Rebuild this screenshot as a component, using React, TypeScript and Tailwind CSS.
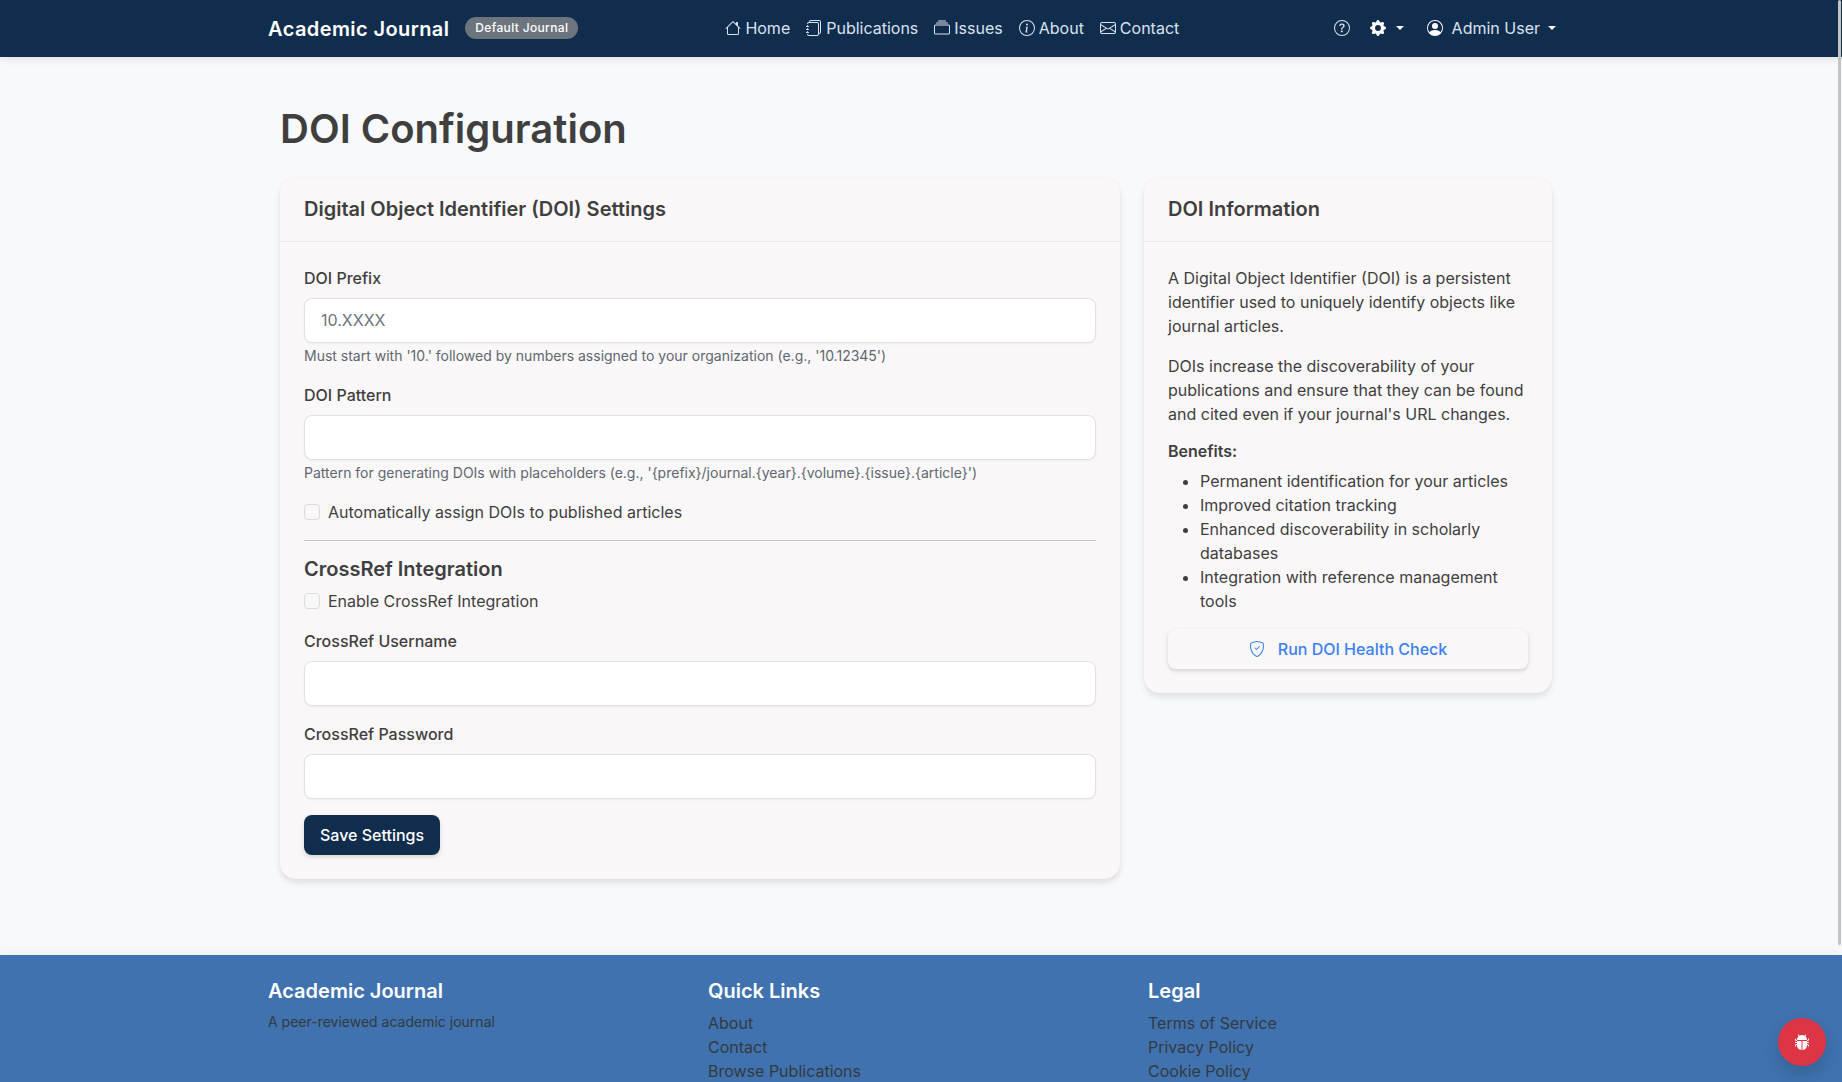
import {
  BsBugFill,
  BsCollection,
  BsEnvelope,
  BsGearFill,
  BsHouse,
  BsInfoCircle,
  BsJournals,
  BsPersonCircle,
  BsQuestionCircle,
  BsShieldCheck,
} from "react-icons/bs";

const navLinks = [
  { label: "Home", icon: BsHouse },
  { label: "Publications", icon: BsJournals },
  { label: "Issues", icon: BsCollection },
  { label: "About", icon: BsInfoCircle },
  { label: "Contact", icon: BsEnvelope },
];

const benefits = [
  "Permanent identification for your articles",
  "Improved citation tracking",
  "Enhanced discoverability in scholarly databases",
  "Integration with reference management tools",
];

function Caret() {
  return <span className="inline-block border-x-[4.8px] border-t-[4.8px] border-x-transparent border-t-current" />;
}

function Navbar() {
  return (
    <header className="relative z-10 h-[57px] bg-[#112d4e] pr-[10px] shadow-[0_2px_8px_rgba(0,0,0,0.1)]">
      <div className="mx-auto flex h-full w-[1296px] items-center text-[#dbe2ef]">
        <a className="text-[20px] font-semibold tracking-[0.4px] text-white">Academic Journal</a>
        <span className="mb-[2px] ml-4 rounded-full bg-[#6c757d] px-[10px] py-1 text-[12px] leading-[14px] font-medium tracking-[0.35px] text-white">
          Default Journal
        </span>
        <nav className="mb-[2px] ml-[139px] flex items-center">
          {navLinks.map((link) => (
            <a key={link.label} className="flex items-center gap-1 px-2">
              <link.icon className="h-4 w-4" />
              {link.label}
            </a>
          ))}
        </nav>
        <div className="mb-[2px] ml-auto flex items-center pr-2">
          <BsQuestionCircle className="h-4 w-4" />
          <span className="ml-5 flex items-center gap-[10px] text-white">
            <BsGearFill className="h-4 w-4" />
            <Caret />
          </span>
          <span className="ml-[23px] flex items-center">
            <BsPersonCircle className="h-4 w-4 text-white" />
            <span className="ml-[9px]">Admin User</span>
            <span className="ml-2 flex text-white">
              <Caret />
            </span>
          </span>
        </div>
      </div>
    </header>
  );
}

function Card({ title, children }: { title: string; children: React.ReactNode }) {
  return (
    <div className="rounded-2xl bg-[#f9f7f7] shadow-[0_4px_6px_rgba(0,0,0,0.1),0_0_2px_rgba(0,0,0,0.03)]">
      <div className="h-[65px] border-b border-[#ebe9ea] px-6 pt-5 text-[20px] leading-6 font-semibold">{title}</div>
      <div className="p-6">{children}</div>
    </div>
  );
}

function Field({ label, placeholder, help, type }: { label: string; placeholder?: string; help?: string; type?: string }) {
  return (
    <div className="mb-4">
      <label className="mb-2 block font-medium">{label}</label>
      <input
        type={type ?? "text"}
        placeholder={placeholder}
        className="block h-[45px] w-full rounded-lg border border-[#dee2e6] bg-white px-4 pb-[1px] shadow-[0_1px_2px_rgba(0,0,0,0.05)] outline-none placeholder:text-[#6c757d]"
      />
      {help && <p className="mt-[2px] pb-[1px] text-[14px] leading-[21px] text-[#5f6771]">{help}</p>}
    </div>
  );
}

function Check({ label, className }: { label: string; className: string }) {
  return (
    <label className={`flex items-center gap-2 ${className}`}>
      <input type="checkbox" className="h-4 w-4 appearance-none rounded-[4px] border border-[#d9dde2] bg-[#f9f7f7]" />
      {label}
    </label>
  );
}

function SettingsCard() {
  return (
    <Card title="Digital Object Identifier (DOI) Settings">
      <Field
        label="DOI Prefix"
        placeholder="10.XXXX"
        help="Must start with '10.' followed by numbers assigned to your organization (e.g., '10.12345')"
      />
      <Field
        label="DOI Pattern"
        help="Pattern for generating DOIs with placeholders (e.g., '{prefix}/journal.{year}.{volume}.{issue}.{article}')"
      />
      <Check label="Automatically assign DOIs to published articles" className="mb-4" />
      <hr className="mb-4 border-[#c4c5c6]" />
      <h4 className="mb-2 text-[20px] leading-6 font-semibold">CrossRef Integration</h4>
      <Check label="Enable CrossRef Integration" className="mb-4" />
      <Field label="CrossRef Username" />
      <Field label="CrossRef Password" type="password" />
      <button className="h-10 rounded-lg bg-[#112d4e] px-4 font-medium text-white shadow-[0_2px_4px_rgba(0,0,0,0.15)]">
        Save Settings
      </button>
    </Card>
  );
}

function InfoCard() {
  return (
    <Card title="DOI Information">
      <p className="mb-4">
        A Digital Object Identifier (DOI) is a persistent identifier used to uniquely identify objects like journal articles.
      </p>
      <p className="mb-4">
        DOIs increase the discoverability of your publications and ensure that they can be found and cited even if your
        journal's URL changes.
      </p>
      <h6 className="mb-2 leading-[19.2px] font-semibold">Benefits:</h6>
      <ul className="mb-4 list-disc pl-8">
        {benefits.map((item) => (
          <li key={item}>{item}</li>
        ))}
      </ul>
      <button className="flex h-10 w-full items-center justify-center gap-[13px] rounded-lg bg-[#f9f7f7] font-medium text-[#3b82f6] shadow-[0_2px_4px_rgba(0,0,0,0.15)]">
        <BsShieldCheck className="h-4 w-4" />
        Run DOI Health Check
      </button>
    </Card>
  );
}

function Footer() {
  return (
    <footer className="h-[200px] bg-[#3f72af] pr-[10px] pt-6 text-[#343a40] shadow-[0_-4px_10px_rgba(0,0,0,0.04)]">
      <div className="mx-auto grid w-[1296px] grid-cols-[440px_440px_1fr]">
        <div>
          <h5 className="mb-2 text-[20px] leading-6 font-semibold text-white">Academic Journal</h5>
          <p className="text-[14px] leading-[21px]">A peer-reviewed academic journal</p>
        </div>
        <div>
          <h5 className="mb-2 text-[20px] leading-6 font-semibold text-white">Quick Links</h5>
          <p>About</p>
          <p>Contact</p>
          <p>Browse Publications</p>
        </div>
        <div>
          <h5 className="mb-2 text-[20px] leading-6 font-semibold text-white">Legal</h5>
          <p>Terms of Service</p>
          <p>Privacy Policy</p>
          <p>Cookie Policy</p>
        </div>
      </div>
    </footer>
  );
}

export default function App() {
  return (
    <div className="relative h-[1082px] overflow-hidden bg-[#f8f9fb] font-[Inter,sans-serif] text-base leading-6 text-[#3f3f3f]">
      <Navbar />
      <main className="mx-auto h-[898px] w-[1272px] -translate-x-[5px] pt-12">
        <h1 className="mb-6 text-[40px] leading-12 font-semibold">DOI Configuration</h1>
        <div className="grid grid-cols-[840px_408px] items-start gap-6">
          <SettingsCard />
          <InfoCard />
        </div>
      </main>
      <Footer />
      <button className="absolute right-4 bottom-4 flex h-12 w-12 items-center justify-center rounded-full bg-[#dc3545] text-white shadow-[0_8px_16px_rgba(0,0,0,0.15)]">
        <BsBugFill className="h-4 w-4" />
      </button>
      <div className="absolute top-0 right-[1px] z-20 h-[945px] w-[3px] rounded-full bg-[#c4c4c4]" />
    </div>
  );
}
